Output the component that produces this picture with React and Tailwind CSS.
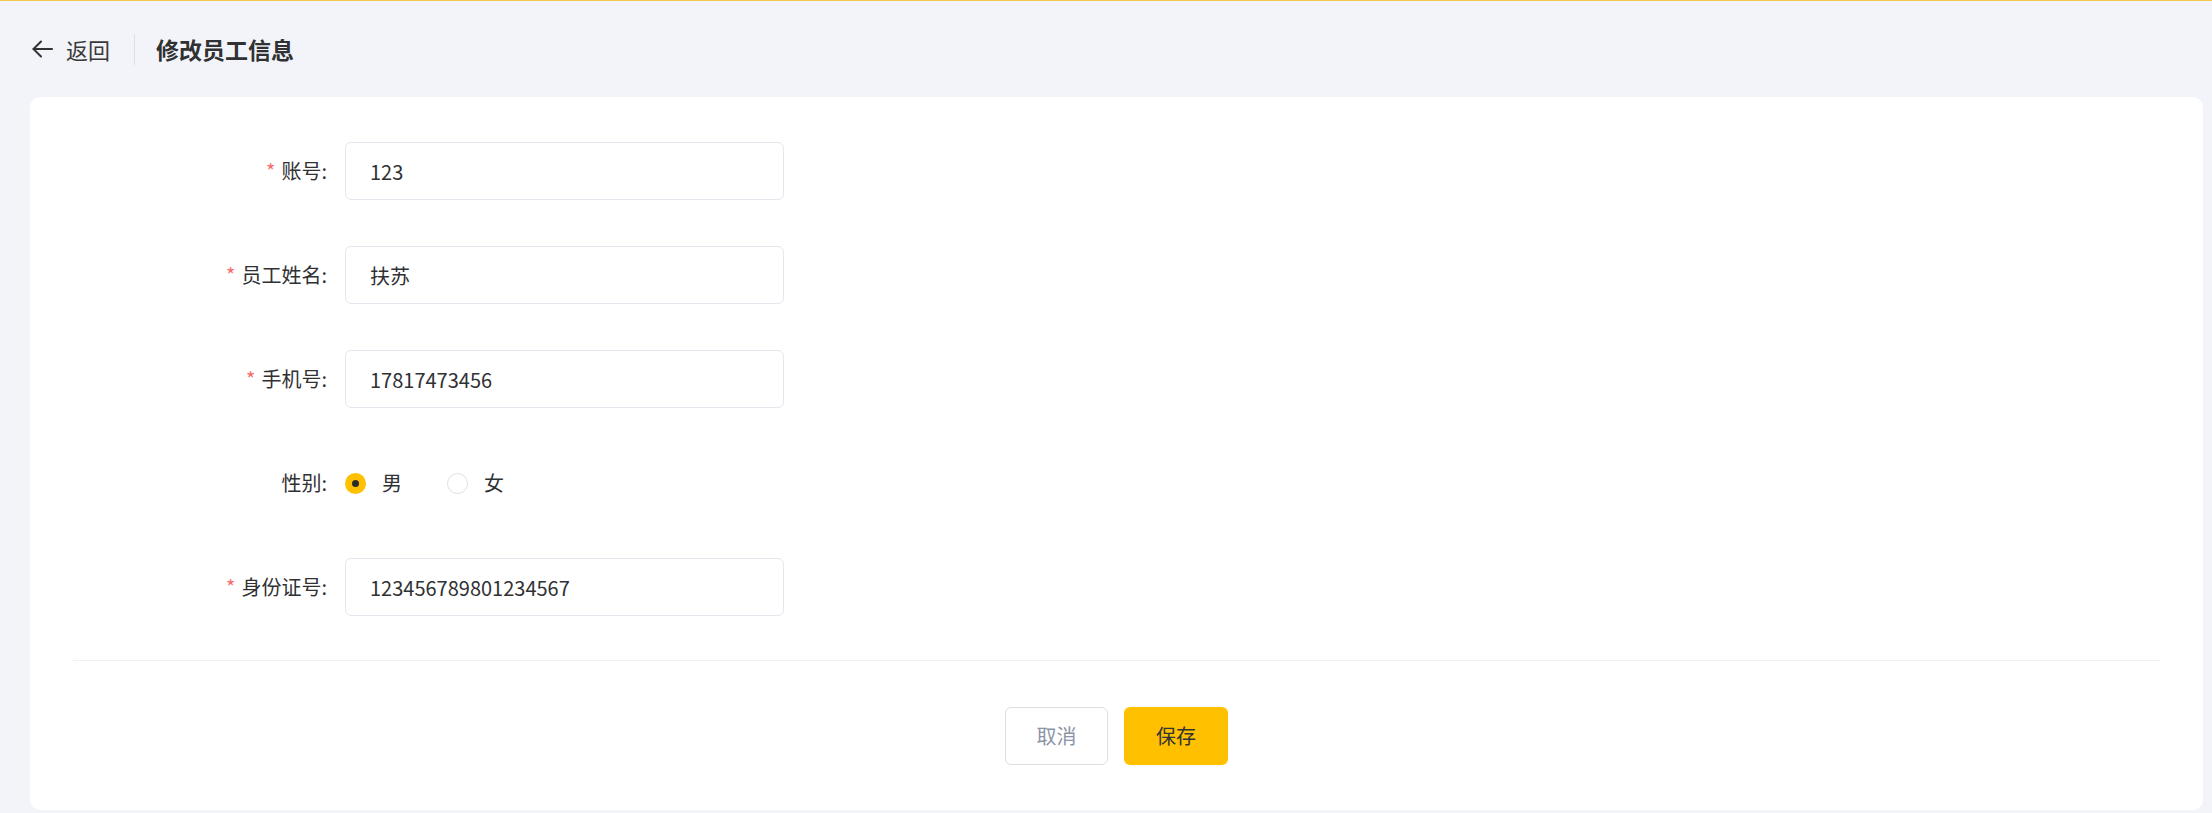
import React, { useState } from 'react';

const font = { fontFamily: '"Noto Sans CJK SC", "Noto Sans", sans-serif' };

const fields = [
  { label: '账号', value: '123', required: true },
  { label: '员工姓名', value: '扶苏', required: true },
  { label: '手机号', value: '17817473456', required: true },
  { label: '性别', type: 'radio' },
  { label: '身份证号', value: '123456789801234567', required: true },
];

const BackArrow = () => (
  <svg width="21" height="18" viewBox="0 0 21 18" fill="none" stroke="#333" strokeWidth="2" strokeLinecap="round" strokeLinejoin="round">
    <path d="M20 9H1.5" />
    <path d="M9 1.5 1.5 9 9 16.5" />
  </svg>
);

const Radio = ({ checked, label, onClick, className = '' }) => (
  <div className={`flex items-center cursor-pointer ${className}`} onClick={onClick}>
    {checked ? (
      <span className="w-[21px] h-[21px] rounded-full bg-[#ffc000] flex items-center justify-center">
        <span className="w-[7px] h-[7px] rounded-full bg-[#2b2b2b]" />
      </span>
    ) : (
      <span className="w-[21px] h-[21px] rounded-full border border-[#dcdfe6] bg-white" />
    )}
    <span className="ml-[16px] text-[20px] text-[#303133]">{label}</span>
  </div>
);

const App = () => {
  const [gender, setGender] = useState('male');

  return (
    <div className="min-h-screen bg-[#f3f4f9] border-t border-[#f2c94c] pb-[3px]" style={font}>
      {/* Header */}
      <div className="h-[96px] flex items-center pl-[32px]">
        <BackArrow />
        <span className="ml-[13px] text-[22px] text-[#3a3a3a]">返回</span>
        <span className="ml-[24px] mr-[21px] w-px h-[31px] bg-[#dcdfe6]" />
        <h1 className="text-[23px] font-bold text-[#303133]">修改员工信息</h1>
      </div>

      {/* Card */}
      <div className="ml-[30px] mr-[9px] bg-white rounded-[10px] px-[43px] pt-[45px] pb-[45px]">
        <div className="flex flex-col gap-[46px]">
          {fields.map((f) => (
            <div key={f.label} className="flex items-center h-[58px]">
              <label className="w-[272px] pr-[18px] text-right text-[20px] text-[#303133]">
                {f.required && <span className="text-[#f56c6c] mr-[6px]">*</span>}
                {f.label}:
              </label>
              {f.type === 'radio' ? (
                <div className="flex items-center">
                  <Radio checked={gender === 'male'} label="男" onClick={() => setGender('male')} />
                  <Radio
                    checked={gender === 'female'}
                    label="女"
                    onClick={() => setGender('female')}
                    className="ml-[45px]"
                  />
                </div>
              ) : (
                <input
                  defaultValue={f.value}
                  className="w-[439px] h-[58px] border border-[#e4e7ed] rounded-[6px] pl-[24px] text-[20px] text-[#303133] outline-none"
                  style={font}
                />
              )}
            </div>
          ))}
        </div>

        <div className="mt-[44px] h-px bg-[#f0f0f2]" />

        <div className="mt-[46px] flex justify-center gap-[16px]">
          <button className="w-[103px] h-[58px] border border-[#dcdfe6] rounded-[6px] text-[20px] text-[#8a94a6] bg-white" style={font}>
            取消
          </button>
          <button className="w-[104px] h-[58px] rounded-[6px] text-[20px] text-[#333] bg-[#ffc000]" style={font}>
            保存
          </button>
        </div>
      </div>
    </div>
  );
};

export default App;
